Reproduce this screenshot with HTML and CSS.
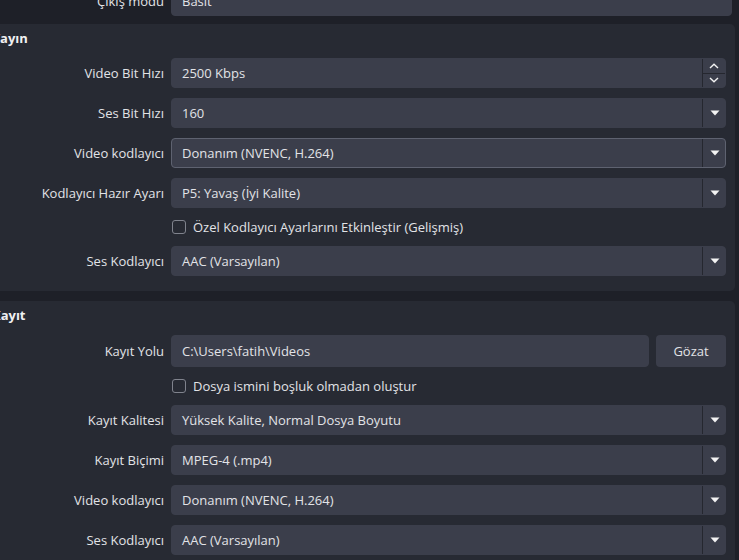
FILE: index.html
```html
<!DOCTYPE html>
<html lang="tr">
<head>
<meta charset="utf-8">
<title>Çıkış Ayarları</title>
<link rel="stylesheet" href="styles.css">
</head>
<body>
<div class="page">
  <div class="top-row">
    <div class="label">Çıkış modu</div>
    <div class="field plain"><span class="value">Basit</span></div>
  </div>

  <section class="group">
    <h2 class="group-title">Yayın</h2>
    <div class="form">
      <div class="label">Video Bit Hızı</div>
      <div class="field spin"><span class="value">2500 Kbps</span>
        <span class="spin-btns">
          <span class="spin-btn"><svg width="10" height="6" viewBox="0 0 10 6"><path d="M1 5 L5 1.2 L9 5" fill="none" stroke="#f2f2f2" stroke-width="1.4"/></svg></span>
          <span class="spin-btn"><svg width="10" height="6" viewBox="0 0 10 6"><path d="M1 1 L5 4.8 L9 1" fill="none" stroke="#f2f2f2" stroke-width="1.4"/></svg></span>
        </span>
      </div>

      <div class="label">Ses Bit Hızı</div>
      <div class="field combo"><span class="value">160</span><span class="arrow"><svg width="10" height="6" viewBox="0 0 10 6"><path d="M0.5 0.5 H9.5 L5 5.5 Z" fill="#f4f4f4"/></svg></span></div>

      <div class="label">Video kodlayıcı</div>
      <div class="field combo focus"><span class="value">Donanım (NVENC, H.264)</span><span class="arrow"><svg width="10" height="6" viewBox="0 0 10 6"><path d="M0.5 0.5 H9.5 L5 5.5 Z" fill="#f4f4f4"/></svg></span></div>

      <div class="label">Kodlayıcı Hazır Ayarı</div>
      <div class="field combo"><span class="value">P5: Yavaş (İyi Kalite)</span><span class="arrow"><svg width="10" height="6" viewBox="0 0 10 6"><path d="M0.5 0.5 H9.5 L5 5.5 Z" fill="#f4f4f4"/></svg></span></div>

      <div class="check-row"><span class="checkbox"></span><span>Özel Kodlayıcı Ayarlarını Etkinleştir (Gelişmiş)</span></div>

      <div class="label">Ses Kodlayıcı</div>
      <div class="field combo"><span class="value">AAC (Varsayılan)</span><span class="arrow"><svg width="10" height="6" viewBox="0 0 10 6"><path d="M0.5 0.5 H9.5 L5 5.5 Z" fill="#f4f4f4"/></svg></span></div>
    </div>
  </section>

  <section class="group">
    <h2 class="group-title">Kayıt</h2>
    <div class="form">
      <div class="label tall">Kayıt Yolu</div>
      <div class="path-row">
        <div class="field text tall"><span class="value">C:\Users\fatih\Videos</span></div>
        <button class="button">Gözat</button>
      </div>

      <div class="check-row"><span class="checkbox"></span><span>Dosya ismini boşluk olmadan oluştur</span></div>

      <div class="label">Kayıt Kalitesi</div>
      <div class="field combo"><span class="value">Yüksek Kalite, Normal Dosya Boyutu</span><span class="arrow"><svg width="10" height="6" viewBox="0 0 10 6"><path d="M0.5 0.5 H9.5 L5 5.5 Z" fill="#f4f4f4"/></svg></span></div>

      <div class="label">Kayıt Biçimi</div>
      <div class="field combo"><span class="value">MPEG-4 (.mp4)</span><span class="arrow"><svg width="10" height="6" viewBox="0 0 10 6"><path d="M0.5 0.5 H9.5 L5 5.5 Z" fill="#f4f4f4"/></svg></span></div>

      <div class="label">Video kodlayıcı</div>
      <div class="field combo"><span class="value">Donanım (NVENC, H.264)</span><span class="arrow"><svg width="10" height="6" viewBox="0 0 10 6"><path d="M0.5 0.5 H9.5 L5 5.5 Z" fill="#f4f4f4"/></svg></span></div>

      <div class="label">Ses Kodlayıcı</div>
      <div class="field combo"><span class="value">AAC (Varsayılan)</span><span class="arrow"><svg width="10" height="6" viewBox="0 0 10 6"><path d="M0.5 0.5 H9.5 L5 5.5 Z" fill="#f4f4f4"/></svg></span></div>
    </div>
  </section>
</div>
</body>
</html>
```

FILE: styles.css
```css
html, body {
  margin: 0;
  padding: 0;
  height: 100%;
  overflow: hidden;
}
body {
  background: #1e2028;
  color: #e2e3e7;
  font-family: "Open Sans", "Noto Sans", sans-serif;
  font-size: 13px;
}
.page {
  margin-left: -20px;
  width: 755px;
  margin-top: -14px;
  display: flex;
  flex-direction: column;
  gap: 10px;
}
.top-row {
  display: grid;
  grid-template-columns: 184px 1fr;
  column-gap: 7px;
  padding-right: 3px;
  margin-bottom: -2px;
}
.label {
  height: 30px;
  line-height: 30px;
  text-align: right;
  white-space: nowrap;
}
.label.tall {
  height: 32px;
  line-height: 32px;
}
.field {
  position: relative;
  height: 30px;
  box-sizing: border-box;
  background: #3b3e4b;
  border: 1px solid #3b3e4b;
  border-radius: 4px;
  display: flex;
  align-items: center;
}
.field.tall {
  height: 32px;
}
.field.focus {
  border-color: #5e6270;
}
.value {
  flex: 1;
  padding-left: 10px;
  white-space: nowrap;
  overflow: hidden;
}
.arrow {
  width: 23px;
  height: 100%;
  border-left: 1px solid #25272f;
  display: flex;
  align-items: center;
  justify-content: center;
  box-sizing: border-box;
}
.arrow svg {
  display: block;
  margin-left: 1px;
}
.spin-btns {
  width: 23px;
  height: 100%;
  border-left: 1px solid #25272f;
  display: flex;
  flex-direction: column;
  box-sizing: border-box;
}
.spin-btn {
  flex: 1;
  display: flex;
  align-items: center;
  justify-content: center;
}
.spin-btn + .spin-btn {
  border-top: 1px solid #25272f;
}
.spin-btn svg {
  display: block;
}
.group {
  background: #272a33;
  border-radius: 5px;
  padding: 4px 9px 15px 0;
}
.group-title {
  margin: 0 0 10px 12px;
  height: 20px;
  line-height: 20px;
  font-size: 13px;
  font-weight: 700;
  color: #f0f0f2;
}
.form {
  display: grid;
  grid-template-columns: 184px 1fr;
  column-gap: 7px;
  row-gap: 10px;
}
.check-row {
  grid-column: 2;
  height: 18px;
  display: flex;
  align-items: center;
  gap: 7px;
  padding-left: 1px;
  white-space: nowrap;
}
.checkbox {
  width: 14px;
  height: 14px;
  box-sizing: border-box;
  border: 1px solid #80838d;
  border-radius: 3px;
}
.path-row {
  display: flex;
  gap: 7px;
}
.path-row .field {
  flex: 1;
}
.button {
  width: 70px;
  height: 32px;
  background: #3b3e4b;
  border: none;
  border-radius: 4px;
  color: #e2e3e7;
  font-family: inherit;
  font-size: 13px;
  padding: 0;
}
```
